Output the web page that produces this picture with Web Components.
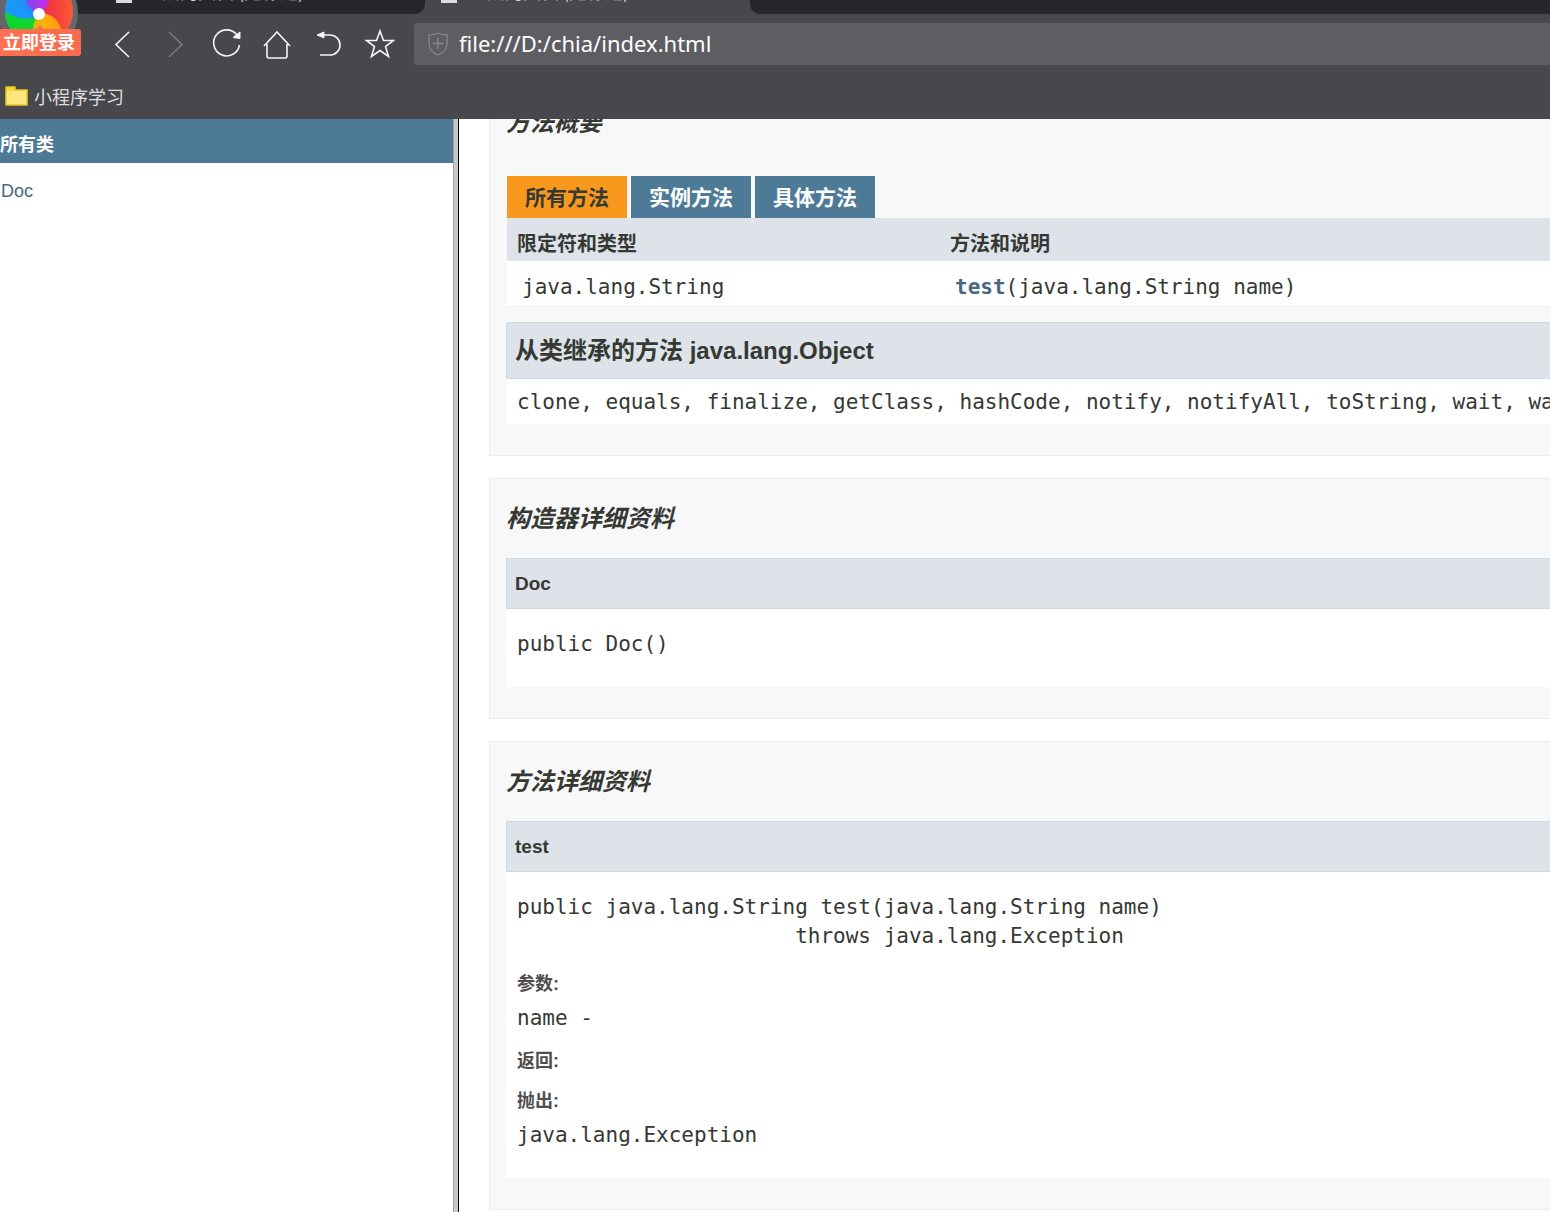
<!DOCTYPE html>
<html lang="zh-CN">
<head>
<meta charset="utf-8">
<title>生成的文档 (无标题)</title>
<style>
html,body{margin:0;height:100%;overflow:hidden}
body{font-family:"Liberation Sans","Noto Sans CJK SC",sans-serif;color:#353833;background:#fff}
</style>
</head>
<body>
<doc-browser>
  <tab-strip slot="chrome"></tab-strip>
  <nav-bar slot="chrome"></nav-bar>
  <bookmark-bar slot="chrome"></bookmark-bar>
  <class-list slot="side"></class-list>
  <doc-section heading="方法概要" class="first"><method-summary></method-summary>
    <detail-block heading="从类继承的方法 java.lang.Object" size="large">clone, equals, finalize, getClass, hashCode, notify, notifyAll, toString, wait, wait, wait</detail-block>
  </doc-section>
  <doc-section heading="构造器详细资料">
    <detail-block heading="Doc"><code-line>public Doc()</code-line></detail-block>
  </doc-section>
  <doc-section heading="方法详细资料">
    <detail-block heading="test"><code-line>public java.lang.String test(java.lang.String name)
                      throws java.lang.Exception</code-line><param-list></param-list></detail-block>
  </doc-section>
</doc-browser>
<script>
const define = (name, markup, setup) => customElements.define(name, class extends HTMLElement {
  constructor() {
    super();
    this.attachShadow({mode: 'open'}).innerHTML = '<style>*{box-sizing:border-box}:host{display:block}</style>' + markup;
  }
  connectedCallback() { if (setup) setup(this, this.shadowRoot); }
});

define('doc-browser', `<style>
:host{display:flex;flex-direction:column;height:100vh;overflow:hidden}
header{flex:none;background:#48474c;position:relative}
.frames{flex:1;min-height:0;display:flex}
aside{flex:0 0 453px}
.split{flex:0 0 6px;background:#c8c8c8;border-left:1px solid #a0a0a0;border-right:1px solid #000}
main{flex:1;min-width:0;overflow:hidden;padding-left:30px}
</style><header><slot name="chrome"></slot></header>
<div class="frames"><aside><slot name="side"></slot></aside><div class="split"></div><main><slot></slot></main></div>`);

define('tab-strip', `<style>
:host{display:flex;height:14px;overflow:hidden;background:#48474c}
.tab{flex:0 0 325px;display:flex;align-items:flex-end;gap:12px;padding:0 0 11px 16px;color:#d8d8d8;font:18px/24px "Noto Sans CJK SC",sans-serif;white-space:nowrap}
.tab.before{flex-basis:425px;padding-left:116px;background:#26262c;border-radius:0 0 10px 0}
.tail{flex:1;background:#26262c;border-radius:0 0 0 10px}
.icon{flex:none;width:16px;height:14px;border:2px solid #dcdcdc;border-bottom-width:3px}
</style><div class="tab before"><span class="icon"></span><span>生成的文档 (无标题)</span></div>
<div class="tab"><span class="icon"></span><span>生成的文档 (无标题)</span></div><div class="tail"></div>`);

define('nav-bar', `<style>
:host{display:flex;align-items:center;height:60px;padding-left:108px}
nav{display:flex;flex:none;width:306px;align-items:center}
button{background:none;border:0;padding:0;margin:0;width:51px;height:36px;display:flex;align-items:center;justify-content:flex-start;color:#f4f4f4}
nav svg{width:32px;height:32px;fill:none;stroke:currentColor;stroke-width:1.6}
button:disabled{color:#7b7a7f}
label{flex:1;height:42px;display:flex;align-items:center;gap:11px;padding-left:14px;background:#5e5d62;border-radius:3px 0 0 3px}
label svg{width:20px;height:24px;fill:none;stroke:#87868b;stroke-width:1.3}
input{flex:1;min-width:0;border:0;padding:0 0 2px;background:none;color:#fff;font:22px/30px "Noto Sans","Noto Sans CJK SC",sans-serif}
.login{position:absolute;left:0;top:0;width:82px;height:56px;display:block}
.login svg{width:82px;height:56px;display:block}
.login span{position:absolute;left:0;top:29px;width:81px;height:27px;border-radius:0 3px 3px 0;background:linear-gradient(90deg,#ff7052,#f86b50);color:#fff;font:bold 18px/25px "Noto Sans CJK SC",sans-serif;text-align:center;padding-right:3px}
</style>
<button class="login" aria-label="立即登录"><svg viewBox="0 0 82 56"><defs>
<linearGradient id="b" x1="0" y1="1" x2="1" y2="0"><stop offset="0" stop-color="#08b4ff"/><stop offset="1" stop-color="#2c7cf4"/></linearGradient>
<linearGradient id="p"><stop offset="0" stop-color="#7a48f5"/><stop offset="1" stop-color="#d42be0"/></linearGradient>
<linearGradient id="r"><stop offset="0" stop-color="#f0284a"/><stop offset="1" stop-color="#ff6a2c"/></linearGradient>
<linearGradient id="y"><stop offset="0" stop-color="#c8c010"/><stop offset=".4" stop-color="#ffae0c"/><stop offset="1" stop-color="#ff9a10"/></linearGradient>
<clipPath id="c"><circle cx="39" cy="11" r="34"/></clipPath></defs>
<circle cx="38" cy="13" r="40" fill="#66656a"/>
<g clip-path="url(#c)"><rect width="82" height="56" fill="url(#b)"/>
<path d="M38 17Q20 22 6 12L2 44H37Q33 26 38 17Z" fill="#0fd62c"/>
<path d="M38 14Q24 6 26-4H49Q50 6 41 12Z" fill="url(#p)"/>
<path d="M40 12Q51 7 48-6H84V40H62Q60 17 41 14Z" fill="url(#r)"/>
<path d="M41 13Q58 14 62 33H34Q31 24 38 16Z" fill="url(#y)"/></g>
<circle cx="39" cy="14" r="6" fill="#fff"/><path d="M35 30L40 25L45 30Z" fill="#ff7052"/></svg><span>立即登录</span></button>
<nav>
<button aria-label="后退"><svg viewBox="0 0 32 32"><path d="M21 4L8 16.500L21 29"/></svg></button>
<button aria-label="前进" disabled><svg viewBox="0 0 32 32"><path d="M10 4L23 16.500L10 29"/></svg></button>
<button aria-label="刷新"><svg viewBox="0 0 32 32"><path d="M27 7A13 13 0 1 0 29.500 17"/><path d="M30 4V10.500L23 9.500Z" fill="currentColor" stroke-width="1"/></svg></button>
<button aria-label="主页"><svg viewBox="0 0 32 32"><path d="M3 18L16 4L29 18M6 16V28Q6 30 8 30H24Q26 30 26 28V16"/></svg></button>
<button aria-label="恢复"><svg viewBox="0 0 32 32"><path d="M8 7H18A10 10 0 0 1 18 27H8"/><path d="M5 7L12 4V10Z" fill="currentColor" stroke-width="1"/></svg></button>
<button aria-label="收藏"><svg viewBox="0 0 32 32"><path d="M17 3L20.500 12.500H30.500L22.500 18.500L25.500 28.500L17 22.500L8.500 28.500L11.500 18.500L3.500 12.500H13.500Z"/></svg></button>
</nav>
<label><svg viewBox="0 0 20 24"><path d="M10 1Q14 3 19 3V13Q18 20 10 23Q2 20 1 13V3Q6 3 10 1ZM10 6V17M4.500 11.500H15.500"/></svg><input aria-label="地址" value="file:///D:/chia/index.html"></label>`);

define('bookmark-bar', `<style>
:host{display:flex;align-items:center;box-sizing:border-box;height:45px;padding:0 5px 2px}
a{display:flex;align-items:center;gap:6px;color:#dedede;text-decoration:none;font:18px/26px "Noto Sans CJK SC",sans-serif}
svg{width:23px;height:20px}
</style><a href="#"><svg viewBox="0 0 23 20"><path d="M1 19V1H10V4H22V19Z" fill="#ffe680" stroke="#e5c71e" stroke-width="1.500"/><path d="M2 2H9V5H2Z" fill="#f5d938"/></svg>小程序学习</a>`);

define('class-list', `<style>
h1{margin:0;background:#4d7a97;color:#fff;font-size:18px;line-height:24px;padding:14px 0 6px}
ul{margin:0;padding:16px 0 0 1px;list-style:none}
a{color:#4a6782;text-decoration:none;font-size:18px;line-height:24px}
</style><h1>所有类</h1><ul><li><a href="#">Doc</a></li></ul>`);

define('doc-section', `<style>
:host{margin-bottom:22px;border:1px solid #ededed;border-right:0;background:#f8f8f8;padding:22px 0 31px 16px}
:host(.first){margin-top:-37px}
h2{margin:0 0 21px;font-size:24px;line-height:36px;font-style:italic}
:host(.first) h2{margin-bottom:35px}
</style><h2></h2><slot></slot>`, (h, r) => r.querySelector('h2').textContent = h.getAttribute('heading'));

define('method-summary', `<style>
:host{margin:0 0 15px 1px}
.tabs{display:flex;gap:4px}
button{border:0;padding:2px 0 0;width:120px;height:42px;background:#4d7a97;color:#fff;font:bold 21px/30px "Liberation Sans","Noto Sans CJK SC",sans-serif;border-radius:0}
button.on{background:#f8981d;color:#353833}
table{width:100%;border-collapse:collapse;table-layout:fixed;background:#fff;border-bottom:1px solid #eee}
th{background:#dee3e9;text-align:left;font-size:20px;line-height:30px;padding:11px 10px 2px}
th:first-child{width:433px}
td{font:21px/30px "DejaVu Sans Mono",monospace;padding:11px 15px 4px;white-space:nowrap}
a{color:#4a6782;font-weight:bold;text-decoration:none}
</style><div class="tabs"><button class="on">所有方法</button><button>实例方法</button><button>具体方法</button></div>
<table><thead><tr><th>限定符和类型</th><th>方法和说明</th></tr></thead><tbody><tr><td>java.lang.String</td><td><a href="#">test</a>(java.lang.String name)</td></tr></tbody></table>`);

define('detail-block', `<style>
h3{margin:0;background:#dee3e9;border:1px solid #d0d9e0;border-right:0;font-size:19px;line-height:25px;padding:12px 8px}
:host([size=large]) h3{font-size:24px;line-height:35px;padding:10px 8px}
.body{background:#fff;padding:21px 0 28px 11px;font:21px/30px "DejaVu Sans Mono",monospace;white-space:nowrap;overflow:hidden}
:host([size=large]) .body{padding:8px 0 7px 11px}
</style><h3></h3><div class="body"><slot></slot></div>`, (h, r) => r.querySelector('h3').textContent = h.getAttribute('heading'));

define('code-line', `<style>:host{white-space:pre;line-height:29px}</style><slot></slot>`);

define('param-list', `<style>
dl{margin:20px 0 0}
dt{font:bold 18px/26px "Liberation Sans","Noto Sans CJK SC",sans-serif;color:#4e4e4e;margin-bottom:6px}
dd{margin:0 0 15px;line-height:30px}
dt.empty{margin-bottom:14px}
dd:last-child{margin-bottom:0}
</style><dl><dt>参数:</dt><dd>name -</dd><dt class="empty">返回:</dt><dt>抛出:</dt><dd>java.lang.Exception</dd></dl>`);
</script>
</body>
</html>
